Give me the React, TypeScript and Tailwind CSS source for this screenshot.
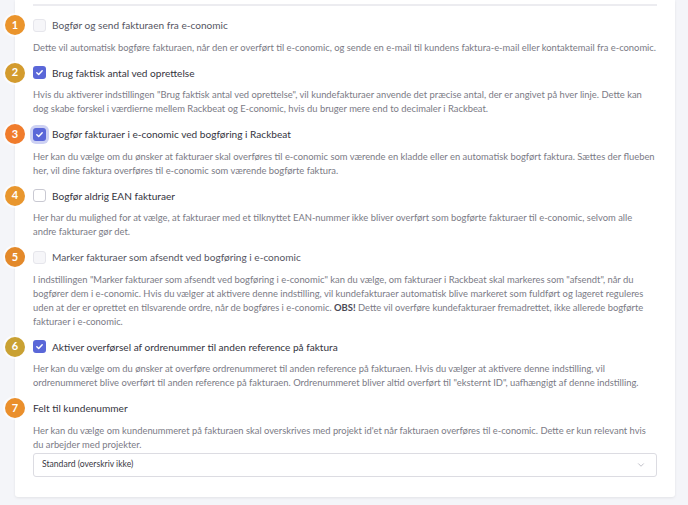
import React from 'react';
import { ChevronDown } from 'lucide-react';

type Item = {
  n: number;
  badge: string;
  label: string;
  state: 'checked' | 'unchecked' | 'disabled' | 'focus' | 'none';
  desc: React.ReactNode;
};

const items: Item[] = [
  {
    n: 1,
    badge: 'bg-[#ea942c]',
    label: 'Bogfør og send fakturaen fra e-conomic',
    state: 'disabled',
    desc: 'Dette vil automatisk bogføre fakturaen, når den er overført til e-conomic, og sende en e-mail til kundens faktura-e-mail eller kontaktemail fra e-conomic.',
  },
  {
    n: 2,
    badge: 'bg-[#d39b2e]',
    label: 'Brug faktisk antal ved oprettelse',
    state: 'checked',
    desc: 'Hvis du aktiverer indstillingen "Brug faktisk antal ved oprettelse", vil kundefakturaer anvende det præcise antal, der er angivet på hver linje. Dette kan dog skabe forskel i værdierne mellem Rackbeat og E-conomic, hvis du bruger mere end to decimaler i Rackbeat.',
  },
  {
    n: 3,
    badge: 'bg-[#f07c2c]',
    label: 'Bogfør fakturaer i e-conomic ved bogføring i Rackbeat',
    state: 'focus',
    desc: 'Her kan du vælge om du ønsker at fakturaer skal overføres til e-conomic som værende en kladde eller en automatisk bogført faktura. Sættes der flueben her, vil dine faktura overføres til e-conomic som værende bogførte faktura.',
  },
  {
    n: 4,
    badge: 'bg-[#e8962e]',
    label: 'Bogfør aldrig EAN fakturaer',
    state: 'unchecked',
    desc: 'Her har du mulighed for at vælge, at fakturaer med et tilknyttet EAN-nummer ikke bliver overført som bogførte fakturaer til e-conomic, selvom alle andre fakturaer gør det.',
  },
  {
    n: 5,
    badge: 'bg-[#e3892a]',
    label: 'Marker fakturaer som afsendt ved bogføring i e-conomic',
    state: 'disabled',
    desc: (
      <>
        I indstillingen "Marker fakturaer som afsendt ved bogføring i e-conomic" kan du vælge, om fakturaer i Rackbeat skal markeres som "afsendt", når du bogfører dem i e-conomic. Hvis du vælger at aktivere denne indstilling, vil kundefakturaer automatisk blive markeret som fuldført og lageret reguleres uden at der er oprettet en tilsvarende ordre, når de bogføres i e-conomic. <b className="font-bold text-[#4a4a55]">OBS!</b> Dette vil overføre kundefakturaer fremadrettet, ikke allerede bogførte fakturaer i e-conomic.
      </>
    ),
  },
  {
    n: 6,
    badge: 'bg-[#c9a133]',
    label: 'Aktiver overførsel af ordrenummer til anden reference på faktura',
    state: 'checked',
    desc: 'Her kan du vælge om du ønsker at overføre ordrenummeret til anden reference på fakturaen. Hvis du vælger at aktivere denne indstilling, vil ordrenummeret blive overført til anden reference på fakturaen. Ordrenummeret bliver altid overført til "eksternt ID", uafhængigt af denne indstilling.',
  },
  {
    n: 7,
    badge: 'bg-[#ea8f2c]',
    label: 'Felt til kundenummer',
    state: 'none',
    desc: 'Her kan du vælge om kundenummeret på fakturaen skal overskrives med projekt id\'et når fakturaen overføres til e-conomic. Dette er kun relevant hvis du arbejder med projekter.',
  },
];

function Box({ state }: { state: Item['state'] }) {
  if (state === 'none') return null;
  if (state === 'checked' || state === 'focus') {
    return (
      <span
        className={`mr-[6px] flex h-[13px] w-[13px] shrink-0 items-center justify-center rounded-[3px] bg-[#5a67d8] ${
          state === 'focus' ? 'ring-[3px] ring-[#5a67d8]/30' : ''
        }`}
      >
        <svg width="9" height="9" viewBox="0 0 10 10" fill="none">
          <path d="M2 5.2 L4.1 7.2 L8 3" stroke="white" strokeWidth="1.6" strokeLinecap="round" strokeLinejoin="round" />
        </svg>
      </span>
    );
  }
  if (state === 'disabled') {
    return <span className="mr-[6px] h-[13px] w-[13px] shrink-0 rounded-[3px] border border-[#e6e6ec] bg-[#f6f6f9]" />;
  }
  return <span className="mr-[6px] h-[13px] w-[13px] shrink-0 rounded-[3px] border border-[#c9c9d2] bg-white" />;
}

export default function App() {
  return (
    <div
      className="h-[505px] w-[688px] overflow-hidden bg-[#f4f5f9] pl-[15px] pr-[13px]"
      style={{ fontFamily: 'Lato, "Open Sans", sans-serif' }}
    >
      <div className="h-[497px] rounded-b-[3px] bg-white px-[18px] pt-[4px] shadow-[0_1px_3px_rgba(0,0,0,0.08)]">
        <div className="h-[2px] bg-[#ececf0]" />
        <div className="pt-[12px]">
          {items.map((it) => (
            <div key={it.n} className="relative mb-[11px]">
              <span
                className={`absolute left-[-28px] top-[-3px] flex h-[20px] w-[20px] items-center justify-center rounded-full ${it.badge} text-[11px] font-bold text-white shadow-[0_0_0_2px_rgba(255,255,255,0.6)]`}
              >
                {it.n}
              </span>
              <div className="flex h-[14px] items-center">
                <Box state={it.state} />
                <span
                  className={`text-[10.1px] leading-[14px] ${
                    it.state === 'disabled' ? 'text-[#55555f]' : 'text-[#34343e]'
                  }`}
                >
                  {it.label}
                </span>
              </div>
              <p
                className={`mt-[8.5px] leading-[14px] text-[#7b7b86] ${
                  it.n === 7 ? 'text-[9.35px]' : 'text-[9.4px]'
                }`}
              >
                {it.desc}
              </p>
              {it.n === 7 && (
                <div className="mt-[1px] flex h-[24px] items-center justify-between rounded-[3px] border border-[#dcdce2] bg-white pl-[8px] pr-[10px]">
                  <span className="text-[8.6px] text-[#3a3a44]">Standard (overskriv ikke)</span>
                  <ChevronDown size={10} strokeWidth={1.5} className="text-[#9a9aa6]" />
                </div>
              )}
            </div>
          ))}
        </div>
      </div>
    </div>
  );
}
